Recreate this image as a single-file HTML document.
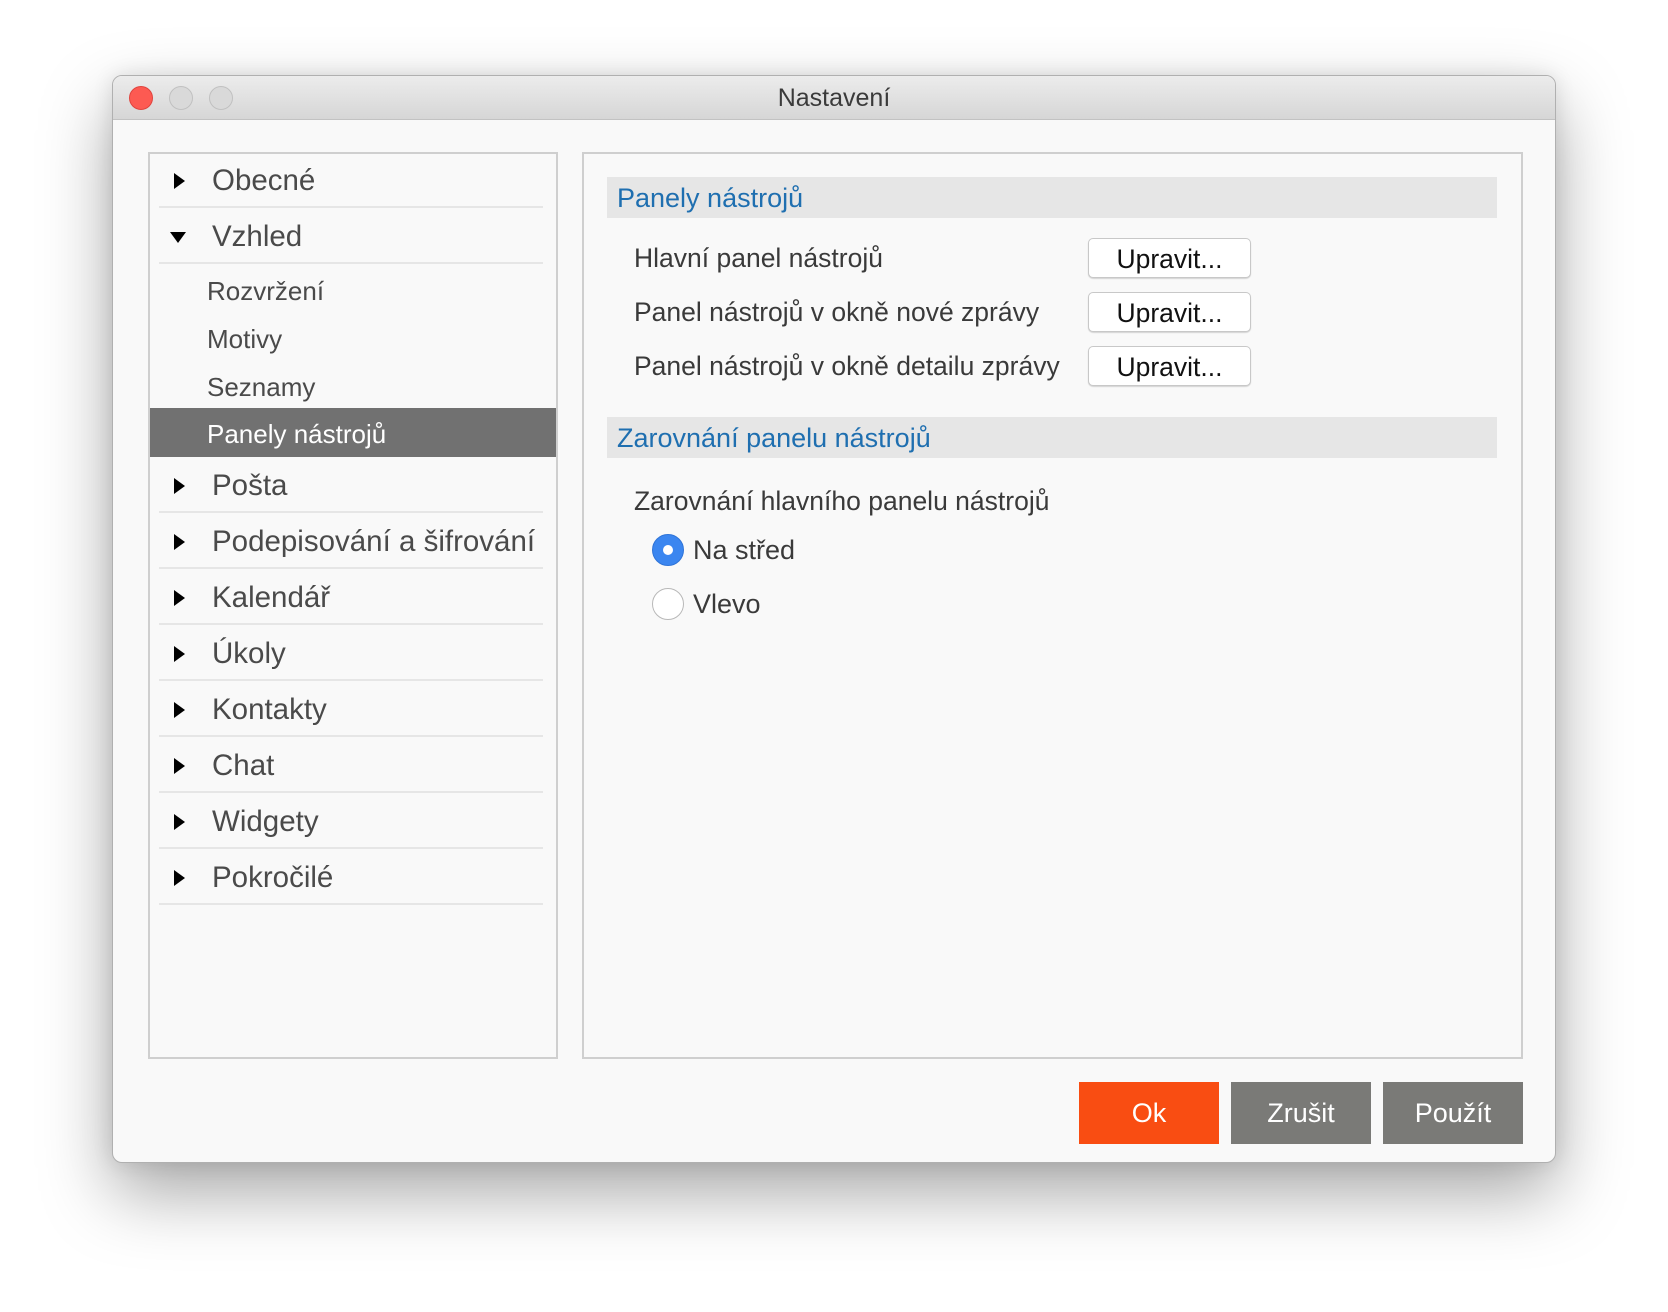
<!DOCTYPE html>
<html><head><meta charset="utf-8"><style>
*{margin:0;padding:0;box-sizing:border-box}
body{width:1668px;height:1312px;background:#fff;font-family:"Liberation Sans",Arial,sans-serif;position:relative;overflow:hidden}
.win{position:absolute;left:112px;top:75px;width:1444px;height:1088px;background:#f9f9f9;border-radius:10px;border:1px solid #b0b0b0;box-shadow:0 30px 70px rgba(0,0,0,.35),0 0 20px rgba(0,0,0,.1);overflow:hidden}
.tb{position:absolute;left:0;top:0;right:0;height:44px;background:linear-gradient(#ececec,#d6d6d6);border-bottom:1px solid #c2c2c2;text-align:center;font-size:25px;line-height:44px;color:#3a3a3a}
.dot{position:absolute;top:10px;width:24px;height:24px;border-radius:50%;background:#d9d9d9;border:1px solid #c0c0c0}
.abs{position:absolute}
.panel{position:absolute;top:76px;height:907px;border:2px solid #cfcfcf;background:#f9f9f9}
.it{position:absolute;left:46px;width:384px;height:56px;border-bottom:2px solid #e6e6e6;font-size:29.5px;color:#4a4a4a;line-height:58px}
.it .t{position:absolute;left:53px}
.tri{position:absolute;left:15px;top:21px;width:0;height:0;border-top:8px solid transparent;border-bottom:8px solid transparent;border-left:11px solid #000}
.trd{position:absolute;left:11px;top:24px;width:0;height:0;border-left:8px solid transparent;border-right:8px solid transparent;border-top:11px solid #000}
.sub{position:absolute;left:94px;font-size:26px;color:#4a4a4a;line-height:50px}
.hdr{position:absolute;left:494px;width:890px;height:41px;background:#e6e6e6;color:#1f6fb0;font-size:27px;line-height:43px;padding-left:10px}
.lbl{position:absolute;left:521px;font-size:26.5px;color:#3a3a3a}
.btn{position:absolute;left:975px;width:163px;height:40px;background:#fff;border:1px solid #c8c8c8;border-radius:5px;box-shadow:0 1px 1px rgba(0,0,0,.15);font-size:26.5px;text-align:center;line-height:40px;color:#111}
.bb{position:absolute;top:1006px;width:140px;height:62px;color:#fff;font-size:27px;text-align:center;line-height:62px;background:#7a7a77}
</style></head><body>
<div class="win">
 <div class="tb">Nastavení
  <div class="dot" style="left:16px;background:#fd5a52;border-color:#e0443e"></div>
  <div class="dot" style="left:56px"></div>
  <div class="dot" style="left:96px"></div>
 </div>
 <div class="panel" style="left:35px;width:410px"></div>
 <div class="it" style="top:76px"><span class="tri"></span><span class="t">Obecné</span></div>
 <div class="it" style="top:132px"><span class="trd"></span><span class="t">Vzhled</span></div>
 <div class="sub" style="top:190px">Rozvržení</div>
 <div class="sub" style="top:238px">Motivy</div>
 <div class="sub" style="top:286px">Seznamy</div>
 <div class="abs" style="left:37px;top:332px;width:406px;height:49px;background:#717171"></div>
 <div class="sub" style="top:333px;color:#fff">Panely nástrojů</div>
 <div class="it" style="top:381px"><span class="tri"></span><span class="t">Pošta</span></div>
 <div class="it" style="top:437px"><span class="tri"></span><span class="t">Podepisování a šifrování</span></div>
 <div class="it" style="top:493px"><span class="tri"></span><span class="t">Kalendář</span></div>
 <div class="it" style="top:549px"><span class="tri"></span><span class="t">Úkoly</span></div>
 <div class="it" style="top:605px"><span class="tri"></span><span class="t">Kontakty</span></div>
 <div class="it" style="top:661px"><span class="tri"></span><span class="t">Chat</span></div>
 <div class="it" style="top:717px"><span class="tri"></span><span class="t">Widgety</span></div>
 <div class="it" style="top:773px"><span class="tri"></span><span class="t">Pokročilé</span></div>

 <div class="panel" style="left:469px;width:941px"></div>
 <div class="hdr" style="top:101px">Panely nástrojů</div>
 <div class="lbl" style="top:167px">Hlavní panel nástrojů</div>
 <div class="btn" style="top:162px">Upravit...</div>
 <div class="lbl" style="top:221px">Panel nástrojů v okně nové zprávy</div>
 <div class="btn" style="top:216px">Upravit...</div>
 <div class="lbl" style="top:275px">Panel nástrojů v okně detailu zprávy</div>
 <div class="btn" style="top:270px">Upravit...</div>
 <div class="hdr" style="top:341px">Zarovnání panelu nástrojů</div>
 <div class="lbl" style="top:410px">Zarovnání hlavního panelu nástrojů</div>
 <div class="abs" style="left:539px;top:458px;width:32px;height:32px;border-radius:50%;background:#3b86f0;border:1px solid #2f74d8"><div class="abs" style="left:10px;top:10px;width:10px;height:10px;border-radius:50%;background:#fff"></div></div>
 <div class="lbl" style="left:580px;top:459px;font-size:27px">Na střed</div>
 <div class="abs" style="left:539px;top:512px;width:32px;height:32px;border-radius:50%;background:#fff;border:1px solid #b8b8b8"></div>
 <div class="lbl" style="left:580px;top:513px;font-size:27px">Vlevo</div>

 <div class="bb" style="left:966px;background:#f94d12">Ok</div>
 <div class="bb" style="left:1118px">Zrušit</div>
 <div class="bb" style="left:1270px">Použít</div>
</div>
</body></html>
